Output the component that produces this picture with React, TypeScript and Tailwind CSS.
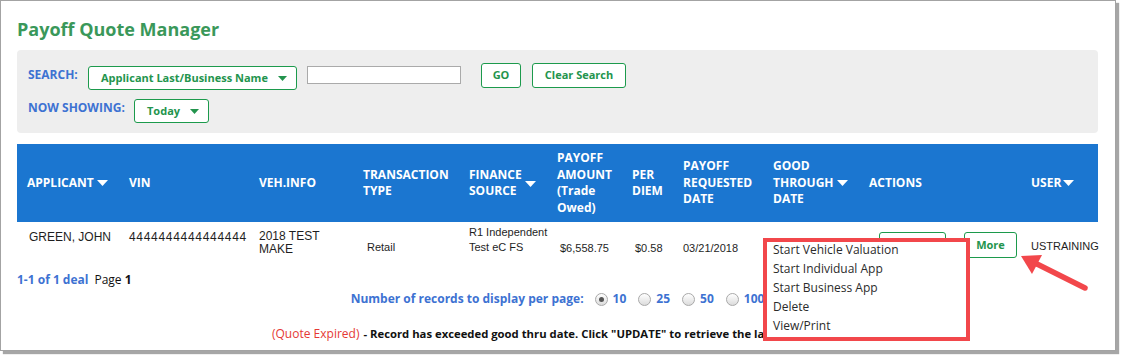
import React from "react";

const cols = "grid-cols-[112px_130px_104px_106px_88px_75px_51px_90px_96px_162px_66px]";

function Caret({ className = "" }: { className?: string }) {
  return (
    <svg width="11" height="6" viewBox="0 0 11 6" className={className}>
      <polygon points="0,0 11,0 5.5,6" fill="currentColor" />
    </svg>
  );
}

function Radio({ checked, label }: { checked?: boolean; label: string }) {
  return (
    <label className="flex items-center gap-[5px]">
      <span className="flex h-[13px] w-[13px] items-center justify-center rounded-full border border-[#a9a9a9] bg-gradient-to-b from-white to-[#dcdcdc]">
        {checked && <span className="h-[5px] w-[5px] rounded-full bg-[#555]" />}
      </span>
      <span>{label}</span>
    </label>
  );
}

const menuItems = ["Start Vehicle Valuation", "Start Individual App", "Start Business App", "Delete", "View/Print"];

const greenBtn = "rounded-[3px] border border-[#1c9a4c] bg-white text-[11px] font-bold text-[#23944d] whitespace-nowrap";

export default function App() {
  return (
    <div className="relative h-[358px] w-[1123px] bg-white font-['Open_Sans',sans-serif]">
      <div className="h-[351px] w-[1116px] overflow-hidden border border-[#a3a3a3] pl-4 pr-[17px] pt-[15px] shadow-[3px_3px_1px_rgba(0,0,0,0.35)]">
        <h1 className="text-[18px] font-bold leading-[26px] text-[#3a985a]">Payoff Quote Manager</h1>

        {/* search panel */}
        <div className="mt-[8px] h-[83px] rounded-[4px] bg-[#eeeeee] pl-[11px] pt-[13px]">
          <div className="flex items-start">
            <span className="mt-[4px] w-[60px] text-[12px] font-bold leading-[16px] text-[#3d72d2]">SEARCH:</span>
            <button className={`mt-[3px] flex h-[24px] w-[209px] items-center pl-[12px] ${greenBtn}`}>
              Applicant Last/Business Name
              <Caret className="ml-[10px] h-[5px] w-[9px] text-[#23944d]" />
            </button>
            <input className="ml-[10px] mt-[3px] h-[18px] w-[154px] border border-[#aaaaaa] bg-white" />
            <button className={`ml-[20px] h-[25px] w-[40px] ${greenBtn}`}>GO</button>
            <button className={`ml-[11px] h-[25px] w-[94px] ${greenBtn}`}>Clear Search</button>
          </div>
          <div className="mt-[9px] flex items-start">
            <span className="mt-[1px] w-[106px] text-[12px] font-bold leading-[16px] text-[#3d72d2]">NOW SHOWING:</span>
            <button className={`flex h-[24px] w-[75px] items-center pl-[12px] ${greenBtn}`}>
              Today
              <Caret className="ml-[10px] h-[5px] w-[9px] text-[#23944d]" />
            </button>
          </div>
        </div>

        {/* table header */}
        <div className={`mt-[11px] grid h-[78px] ${cols} items-center bg-[#1b76d0] text-[12px] font-bold leading-[16.5px] text-white`}>
          <div className="flex items-center gap-[3px] pl-[10px]">APPLICANT <Caret /></div>
          <div>VIN</div>
          <div>VEH.INFO</div>
          <div>TRANSACTION<br />TYPE</div>
          <div className="flex items-center gap-[3px]">
            <span>FINANCE<br />SOURCE</span>
            <Caret className="mt-[1px]" />
          </div>
          <div>PAYOFF<br />AMOUNT<br />(Trade<br />Owed)</div>
          <div>PER<br />DIEM</div>
          <div>PAYOFF<br />REQUESTED<br />DATE</div>
          <div>
            GOOD<br />
            <span className="inline-flex items-center gap-[3px]">THROUGH <Caret /></span>
            <br />DATE
          </div>
          <div>ACTIONS</div>
          <div className="flex items-center gap-[2px]">USER <Caret /></div>
        </div>

        {/* data row */}
        <div className={`grid h-[44px] ${cols} items-start font-['Liberation_Sans',sans-serif] text-[#1e1e1e]`}>
          <div className="pl-[12px] pt-[8px] text-[12px] leading-[14px]">GREEN, JOHN</div>
          <div className="pt-[8px] text-[12px] leading-[14px] tracking-[0.7px]">4444444444444444</div>
          <div className="pt-[8px] text-[12px] leading-[13px]">2018 TEST<br />MAKE</div>
          <div className="pl-[4px] pt-[18px] text-[11px] leading-[14px]">Retail</div>
          <div className="pt-[3px] text-[11px] leading-[14.5px]">R1 Independent<br />Test eC FS</div>
          <div className="pl-[3px] pt-[19px] text-[11px] leading-[14px]">$6,558.75</div>
          <div className="pl-[3px] pt-[19px] text-[11px] leading-[14px]">$0.58</div>
          <div className="pt-[19px] text-[11px] leading-[14px]">03/21/2018</div>
          <div />
          <div className="flex pl-[10px] pt-[10px] font-['Open_Sans',sans-serif]">
            {/* Update button sits behind the open menu */}
            <button aria-label="Update" className="h-[26px] w-[67px] rounded-[3px] border border-[#1c9a4c] bg-white" />
            <button className={`ml-[18px] h-[26px] w-[53px] ${greenBtn}`}>More</button>
          </div>
          <div className="pt-[17px] text-[11px] leading-[14px]">USTRAINING</div>
        </div>

        <div className="mt-[6px] text-[12px] leading-[16px]">
          <span className="font-bold text-[#3d72d2]">1-1 of 1 deal</span>
          <span className="ml-[6px] text-[#111]">
            Page <b>1</b>
          </span>
        </div>

        <div className="mt-[3px] flex justify-center text-[12px] font-bold leading-[16px] text-[#3d72d2]">
          <span>Number of records to display per page:</span>
          <div className="ml-[11px] flex gap-[12px]">
            <Radio checked label="10" />
            <Radio label="25" />
            <Radio label="50" />
            <Radio label="100" />
          </div>
        </div>

        <div className="mt-[19px] flex items-baseline whitespace-nowrap pl-[255px] leading-[16px]">
          <span className="text-[12px] text-[#e53935]">(Quote Expired)</span>
          <span className="ml-[4px] text-[11.3px] font-bold text-[#111]">
            - Record has exceeded good thru date. Click "UPDATE" to retrieve the latest payoff quote.
          </span>
        </div>
      </div>

      {/* dropdown menu of More */}
      <div className="absolute left-[763px] top-[238px] h-[103px] w-[207px] border-[4px] border-[#f2474b] bg-white pl-[6px] text-[12px] leading-[19px] text-[#2b2b2b]">
        <ul className="-mt-[2px]">
          {menuItems.map((m) => (
            <li key={m}>{m}</li>
          ))}
        </ul>
      </div>

      {/* annotation arrow */}
      <svg className="absolute left-[1010px] top-[248px] h-[50px] w-[85px]" viewBox="0 0 85 50">
        <line x1="75" y1="40" x2="27" y2="16" stroke="#f2474b" strokeWidth="5.5" strokeLinecap="round" />
        <polygon points="11,8 32,7 22,26" fill="#f2474b" />
      </svg>
    </div>
  );
}
